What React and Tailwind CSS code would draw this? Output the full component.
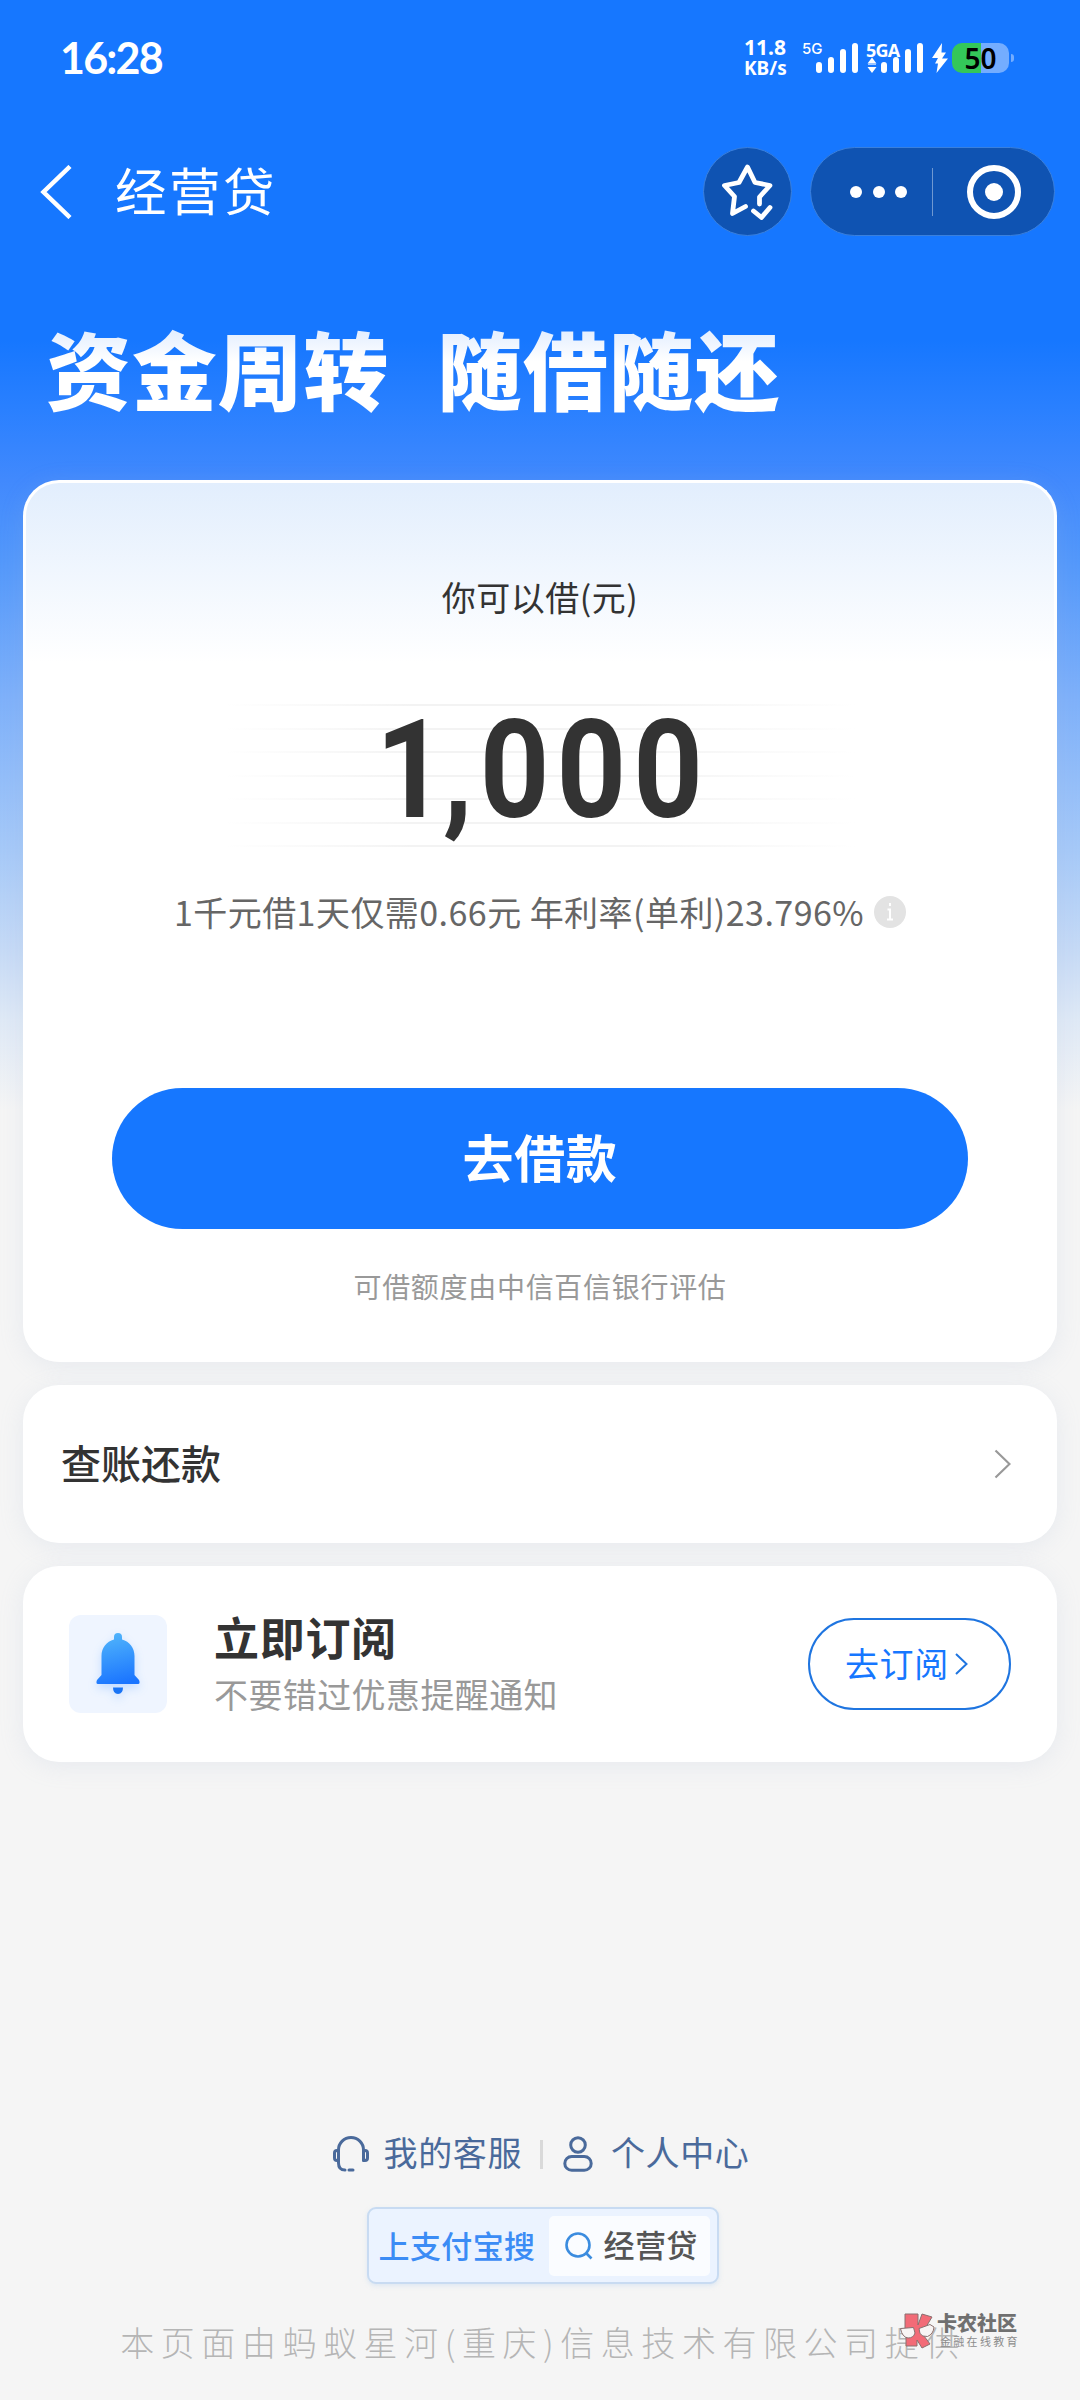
import React from "react";

const CJK = "font-['Noto_Sans_CJK_SC',sans-serif]";

const SIGNAL_BARS = "M3 22v5 M15 17v10 M27 9v18 M39 3v24";

function StatusBar() {
  return (
    <div className="flex h-[116px] items-center pl-[60px] pr-[66px] text-white">
      <div className="-mt-[2px] font-[Lato,sans-serif] text-[43px] font-bold leading-none tracking-[-1.800px]">16:28</div>
      <div className="ml-auto flex items-center">
        <div className="w-[42px] whitespace-nowrap text-center font-['Noto_Sans',sans-serif] text-[21px] font-bold leading-[21px]">
          <div>11.8</div>
          <div className="text-[19px]">KB/s</div>
        </div>
        <div className="relative ml-[30px] h-[30px] w-[42px]">
          <svg viewBox="0 0 42 30" className="h-[30px] w-[42px]" fill="none" stroke="#fff" strokeWidth="6" strokeLinecap="round">
            <path d={SIGNAL_BARS} />
          </svg>
          <span className="absolute -left-[14px] -top-[1px] font-[Inter,sans-serif] text-[15px] font-medium leading-[14px]">5G</span>
        </div>
        <div className="relative ml-[9px] flex h-[30px] w-[56px]">
          <svg viewBox="0 0 10 30" className="h-[30px] w-[10px]" fill="#fff">
            <path d="M5 14.500l4.500 6h-9zM5 30l4.500-6h-9z" />
            <path d="M1 20.800h8v1.200H1z" opacity=".6" />
          </svg>
          <svg viewBox="0 0 42 30" className="ml-[4px] h-[30px] w-[42px]" fill="none" stroke="#fff" strokeWidth="6" strokeLinecap="round">
            <path d={SIGNAL_BARS} />
          </svg>
          <span className="absolute -left-[1px] top-0 font-['Noto_Sans',sans-serif] text-[18px] font-bold leading-[15px] tracking-[-0.800px]">5GA</span>
        </div>
        <svg viewBox="0 0 16 30" className="ml-[9px] h-[30px] w-[16px]" fill="#fff">
          <path d="M10 0L0 15h6L3 20.500h3L4.500 30L16 15.500h-6L14 9.500H9.500z" />
        </svg>
        <div className="relative ml-[4px] flex h-[30px] w-[57px] items-center justify-center rounded-[10px] bg-[linear-gradient(90deg,#34c759_0_29px,#74adff_29px)]">
          <span className="font-['Noto_Sans',sans-serif] text-[28px] font-semibold leading-[30px] text-black">50</span>
        </div>
        <div className="ml-[2px] h-[8px] w-[3px] rounded-r-full bg-[#74adff]" />
      </div>
    </div>
  );
}

function NavBar() {
  return (
    <div className="mt-[31px] flex h-[89px] items-center pl-[40px] pr-[25px] text-white">
      <svg viewBox="0 0 32 54" className="h-[54px] w-[32px]" fill="none" stroke="#fff" strokeWidth="4.500">
        <path d="M30 1.500L3.500 27L30 52.500" />
      </svg>
      <h1 className="-mt-[6px] ml-[43px] text-[51.500px] font-normal leading-[60px] tracking-[2.500px]">经营贷</h1>
      <div className="ml-auto flex h-[89px] w-[89px] items-center justify-center rounded-full border border-[#3a80dd] bg-[#0f53b2] pr-[2px]">
        <svg viewBox="0 0 52 56" className="h-[56px] w-[52px]" fill="none" stroke="#fff" strokeWidth="4.800" strokeLinecap="round" strokeLinejoin="round">
          <path d="M24.500 42.500L11.500 49.500L13.500 32.500L3.500 21.500L18 18.500L26.500 3L34 18.500L49 21.500L38.500 33V40" />
          <path d="M32.500 47L40.500 53.500L49 43.500" />
        </svg>
      </div>
      <div className="ml-[18px] flex h-[89px] w-[245px] items-center rounded-full border border-[#3a80dd] bg-[#0f53b2]">
        <div className="flex w-[121px] gap-[10.500px] pl-[39px]">
          <i className="h-[12px] w-[12px] rounded-full bg-white" />
          <i className="h-[12px] w-[12px] rounded-full bg-white" />
          <i className="h-[12px] w-[12px] rounded-full bg-white" />
        </div>
        <div className="h-[48px] w-px bg-[#6f98d1]" />
        <div className="ml-[34px] flex h-[54px] w-[54px] items-center justify-center rounded-full border-[6px] border-white">
          <i className="h-[18px] w-[18px] rounded-full bg-white" />
        </div>
      </div>
    </div>
  );
}

function AmountCard() {
  return (
    <section className="flex h-[882px] flex-col items-center rounded-[36px] border-[3px] border-b-0 border-white bg-[linear-gradient(180deg,#e2eefd_0px,#ffffff_180px)] shadow-[0_4px_24px_rgba(160,180,210,0.16)]">
      <div className="mt-[90px] text-[34px] leading-[48px] tracking-[0.500px] text-[#333]">你可以借(元)</div>
      <div className="relative mt-[83px] flex h-[143px] w-[630px] flex-col justify-between">
        {[0, 1, 2, 3, 4, 5, 6].map((i) => (
          <i key={i} className="h-[2px] w-full bg-[linear-gradient(90deg,transparent,#f3f3f3_30%,#f3f3f3_65%,transparent)]" />
        ))}
        <div className="absolute -top-[5px] left-[3px] flex w-full items-center justify-center">
          <span className="origin-center scale-x-[0.88] whitespace-nowrap font-[Roboto,sans-serif] text-[138px] font-bold leading-[143px] tracking-[8px] text-[#333]">
            <span className="tracking-[-3px]">1</span>,000
          </span>
        </div>
      </div>
      <div className="mt-[40px] flex h-[50px] items-center whitespace-nowrap text-[34px] leading-[50px] tracking-[0.450px] text-[#666]">
        <span>1千元借1天仅需0.66元 年利率(单利)23.796%</span>
        <span className="ml-[10px] flex h-[32px] w-[32px] items-center justify-center rounded-full bg-[#e3e3e3]">
          <svg viewBox="0 0 8 18" className="h-[18px] w-[8px]" fill="none" stroke="#fff" strokeWidth="2">
            <path d="M4 0v3M1.500 6.500H4V16M1 16.500h6" />
          </svg>
        </span>
      </div>
      <button className="mt-[151px] h-[141px] w-[856px] rounded-full bg-[#1677ff] pb-[6px] text-[51px] font-bold leading-[60px] tracking-[0.600px] text-white">
        去借款
      </button>
      <div className="mt-[35px] text-[28px] leading-[44px] tracking-[0.700px] text-[#999]">可借额度由中信百信银行评估</div>
    </section>
  );
}

function RepayRow() {
  return (
    <section className="mt-[23px] flex h-[158px] items-center rounded-[36px] bg-white pl-[38px] pr-[46px] shadow-[0_4px_24px_rgba(160,180,210,0.16)]">
      <span className="-mt-[5px] text-[40px] font-medium leading-[60px] text-[#333]">查账还款</span>
      <svg viewBox="0 0 17 30" className="ml-auto h-[30px] w-[17px]" fill="none" stroke="#999" strokeWidth="2.200">
        <path d="M1.500 1.500L15.500 15L1.500 28.500" />
      </svg>
    </section>
  );
}

function SubscribeRow() {
  return (
    <section className="mt-[23px] flex h-[196px] items-center rounded-[36px] bg-white pl-[46px] pr-[46px] shadow-[0_4px_24px_rgba(160,180,210,0.16)]">
      <div className="flex h-[98px] w-[98px] items-center justify-center rounded-[12px] bg-[#eff5ff]">
        <svg viewBox="0 0 44 62" className="h-[62px] w-[44px] drop-shadow-[0_4px_5px_rgba(22,119,255,0.2)]">
          <defs>
            <linearGradient id="bell" x1="0.400" y1="0" x2="0.600" y2="1">
              <stop offset="0" stopColor="#50b4fb" />
              <stop offset="1" stopColor="#1a74ff" />
            </linearGradient>
          </defs>
          <path fill="url(#bell)" d="M22 0a4 4 0 0 1 4 4v2.500C33.500 8.500 38.500 15 38.500 23V42L43 47q1.500 4-1 4H2q-2.500 0-1-4L5.500 42V23C5.500 15 10.500 8.500 18 6.500V4a4 4 0 0 1 4-4z" />
          <path fill="#1a74f5" d="M17 54.500h10q0 6.500-5 6.500t-5-6.500z" />
        </svg>
      </div>
      <div className="ml-[47px] flex flex-col pt-[2px]">
        <span className="text-[45px] font-bold leading-[58px] tracking-[0.700px] text-[#333]">立即订阅</span>
        <span className="text-[34px] leading-[56px] tracking-[0.400px] text-[#999]">不要错过优惠提醒通知</span>
      </div>
      <button className="ml-auto flex h-[92px] w-[203px] items-center rounded-full border-2 border-[#1f75e0] pb-[2px] pl-[35px] text-[34px] leading-[50px] tracking-[0.600px] text-[#1677ff]">
        去订阅
        <svg viewBox="0 0 13 22" className="ml-[6px] mt-[2px] h-[22px] w-[13px]" fill="none" stroke="#1f75e0" strokeWidth="2">
          <path d="M1 1L11.500 11L1 21" />
        </svg>
      </button>
    </section>
  );
}

function Footer() {
  return (
    <footer className="mt-[367px] flex flex-col items-center">
      <div className="ml-[2px] flex h-[50px] items-center whitespace-nowrap text-[34px] leading-[50px] tracking-[0.600px] text-[#4a6a9b]">
        <svg viewBox="0 0 36 36" className="h-[36px] w-[36px]" fill="none" stroke="#4a6a9b" strokeWidth="3" strokeLinecap="round">
          <path d="M5.500 26V14a12.500 12.500 0 0 1 25 0V24M5.500 24V27Q5.500 34 12 34M16 34h4" />
          <path d="M5.500 14.500H4Q1.500 14.500 1.500 17v5Q1.500 24.500 4 24.500H5.500M30.500 14.500H32Q34.500 14.500 34.500 17v5Q34.500 24.500 32 24.500H30.500" />
        </svg>
        <span className="-mt-[5px] ml-[15px]">我的客服</span>
        <i className="ml-[18px] h-[29px] w-[3px] bg-[#d9d9d9]" />
        <svg viewBox="0 0 30 36" className="ml-[20px] h-[36px] w-[30px]" fill="none" stroke="#4a6a9b" strokeWidth="3">
          <circle cx="15" cy="9" r="7.300" />
          <rect x="1.800" y="20.500" width="26.400" height="13.800" rx="6.900" />
        </svg>
        <span className="-mt-[5px] ml-[18px]">个人中心</span>
      </div>
      <div className="ml-[5px] mt-[28px] flex h-[77px] w-[352px] items-center whitespace-nowrap rounded-[9px] border-2 border-[#c8dbf2] bg-[#ebf3ff] pl-[10px] pr-[7px] text-[31px] font-medium leading-[46px] tracking-[0.400px] shadow-[0_2px_4px_rgba(200,219,242,0.5)]">
        <span className="-mt-[2px] text-[#3b8cf5]">上支付宝搜</span>
        <div className="ml-auto flex h-[60px] w-[161px] items-center rounded-[5px] bg-[#fafcff] pl-[16px]">
          <svg viewBox="0 0 28 28" className="h-[28px] w-[28px]" fill="none" stroke="#3b8cdf" strokeWidth="2.600">
            <circle cx="13" cy="13" r="11.500" />
            <path d="M20.500 20.500L26.500 26.500" />
          </svg>
          <span className="-mt-[3px] ml-[11px] text-[#555]">经营贷</span>
        </div>
      </div>
      <div className="relative mt-[30px] flex h-[56px] w-full justify-center whitespace-nowrap">
        <span className="pl-[6px] text-[34px] font-light leading-[56px] tracking-[6.550px] text-[#b5b5b5]">
          本页面由蚂蚁星河(重庆)信息技术有限公司提供
        </span>
        <div className="absolute -top-[1px] left-[899px] flex">
          <svg viewBox="0 0 36 36" className="h-[36px] w-[36px]" stroke="#8a7070" strokeWidth="1">
            <path fill="#f26b77" d="M6 1H19V12L23 1L33 4L27 14L22 19L31 31L23 35L18 27V33H7V22H6z" />
            <path fill="#f8f4f4" d="M1.500 15.500L14.500 14.500L16 20q-1.500 5-7 5-6-1-7.500-9.500zM20 15.500L31 11.500L35 14q-.5 7-6.500 9.500-5.500.5-7.500-3z" />
          </svg>
          <div className="ml-[2px] flex flex-col">
            <span className="text-[20px] font-black leading-[20px] text-[#707070]">卡农社区</span>
            <span className="mt-[2px] pl-[3px] text-[11px] leading-[12px] tracking-[2.300px] text-[#8c8c8c]">金融在线教育</span>
          </div>
        </div>
      </div>
    </footer>
  );
}

export default function App() {
  return (
    <main
      lang="zh-CN"
      className={`${CJK} h-[2400px] w-[1080px] overflow-hidden bg-[linear-gradient(180deg,#1677ff_0px,#1677ff_340px,#2a80ff_410px,#4189fd_480px,#5398fb_560px,#7fb1fa_700px,#a6c9f8_850px,#c6daf6_950px,#dfe9f6_1020px,#f5f5f5_1110px)]`}
    >
      <StatusBar />
      <NavBar />
      <div className="flex h-[244px] items-start pl-[46px] pt-[76px]">
        <div className="flex gap-[48px] whitespace-nowrap bg-[linear-gradient(180deg,#e6f0ff_20%,#ffffff_45%)] bg-clip-text text-[85px] font-black leading-[110px] tracking-[0.800px] text-transparent">
          <span>资金周转</span>
          <span>随借随还</span>
        </div>
      </div>
      <div className="px-[23px]">
        <AmountCard />
        <RepayRow />
        <SubscribeRow />
      </div>
      <Footer />
    </main>
  );
}
